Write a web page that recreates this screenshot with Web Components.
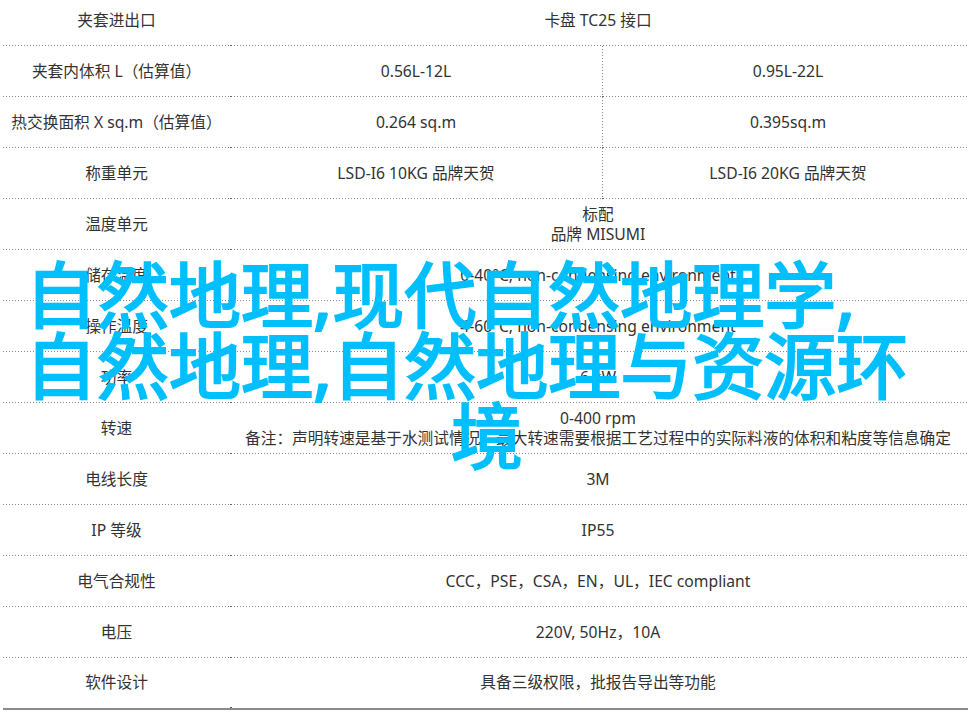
<!DOCTYPE html>
<html lang="zh">
<head>
<meta charset="utf-8">
<title>自然地理</title>
<style>
  html, body { margin: 0; background: #fff; }
  body { overflow: hidden; height: 716px; font-family: "Noto Sans", "Noto Sans CJK SC", sans-serif; }
</style>
</head>
<body>
<spec-sheet>
  <spec-row label="夹套进出口"><span>卡盘 TC25 接口</span></spec-row>
  <spec-row label="夹套内体积 L（估算值）"><span>0.56L-12L</span><span>0.95L-22L</span></spec-row>
  <spec-row label="热交换面积 X sq.m（估算值）"><span>0.264 sq.m</span><span>0.395sq.m</span></spec-row>
  <spec-row label="称重单元"><span>LSD-I6 10KG 品牌天贺</span><span>LSD-I6 20KG 品牌天贺</span></spec-row>
  <spec-row label="温度单元"><span>标配<br>品牌 MISUMI</span></spec-row>
  <spec-row label="储存温度"><span>0-40°C, non-condensing environment</span></spec-row>
  <spec-row label="操作温度"><span>4-60°C, non-condensing environment</span></spec-row>
  <spec-row label="功率"><span>6 kW</span></spec-row>
  <spec-row label="转速"><span>0-400 rpm<br>备注：声明转速是基于水测试情况，最大转速需要根据工艺过程中的实际料液的体积和粘度等信息确定</span></spec-row>
  <spec-row label="电线长度"><span>3M</span></spec-row>
  <spec-row label="IP 等级"><span>IP55</span></spec-row>
  <spec-row label="电气合规性"><span>CCC，PSE，CSA，EN，UL，IEC compliant</span></spec-row>
  <spec-row label="电压"><span>220V, 50Hz，10A</span></spec-row>
  <spec-row label="软件设计"><span>具备三级权限，批报告导出等功能</span></spec-row>
</spec-sheet>
<hero-title>自然地理,现代自然地理学,自然地理,自然地理与资源环<span slot="tail">境</span></hero-title>

<script>
class SpecSheet extends HTMLElement {
  constructor() {
    super();
    this.attachShadow({ mode: 'open' });
    this.shadowRoot.innerHTML = `
      <style>
        :host {
          display: block;
          width: 965px;
          margin: -5px 0 0 3px;
          border-bottom: 2px solid #8a8a8a;
        }
      </style>
      <slot></slot>
    `;
  }
}

class SpecRow extends HTMLElement {
  constructor() {
    super();
    this.attachShadow({ mode: 'open' });
  }

  connectedCallback() {
    const split = this.children.length > 1;
    const dots = 'repeating-linear-gradient(to bottom, #8a8a8a 0 1px, transparent 1px 3px)';
    this.shadowRoot.innerHTML = `
      <style>
        :host {
          display: grid;
          grid-template-columns: 227px ${split ? '372px 366px' : '736px'};
          height: 51px;
          color: #333;
          font-size: 15.7px;
          line-height: 20px;
          text-align: center;
          background: repeating-linear-gradient(to right, #8a8a8a 0 1px, transparent 1px 3px) left bottom / 100% 1px no-repeat;
        }
        :host(:last-child) { background: none; height: 50px; }
        .cell { display: flex; align-items: center; justify-content: center; padding-bottom: 2px; }
        .tick { position: relative; }
        .tick::before {
          content: '';
          position: absolute;
          left: 0;
          bottom: 0;
          width: 2px;
          height: 1px;
          background: #666;
        }
        .divided {
          background: ${dots} left top / 1px 100% no-repeat;
          padding-left: 6px;
        }
      </style>
      <div class="cell">${this.getAttribute('label')}</div>
      <div class="cell tick"><slot name="a"></slot></div>
      ${split ? '<div class="cell tick divided"><slot name="b"></slot></div>' : ''}
    `;
    if (this.children[0]) this.children[0].slot = 'a';
    if (this.children[1]) this.children[1].slot = 'b';
  }
}

class HeroTitle extends HTMLElement {
  constructor() {
    super();
    this.attachShadow({ mode: 'open' });
    this.shadowRoot.innerHTML = `
      <style>
        :host {
          display: block;
          position: absolute;
          left: 25px;
          top: 259px;
          width: 924px;
          color: #00bfff;
          font-size: 72px;
          font-weight: 400;
          -webkit-text-stroke: 2.2px #00bfff;
          line-height: 70.5px;
        }
        .lines { padding-right: 34px; }
        .tail { text-align: center; }
      </style>
      <div class="lines"><slot></slot></div>
      <div class="tail"><slot name="tail"></slot></div>
    `;
  }
}

customElements.define('spec-sheet', SpecSheet);
customElements.define('spec-row', SpecRow);
customElements.define('hero-title', HeroTitle);
</script>
</body>
</html>
